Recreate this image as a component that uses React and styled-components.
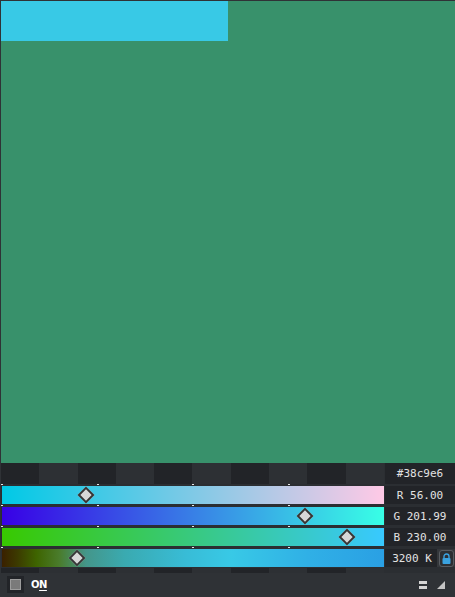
import React from "react";
import styled, { createGlobalStyle } from "styled-components";

const GlobalStyle = createGlobalStyle`
  html, body {
    margin: 0;
    padding: 0;
    background: #2f3236;
    overflow: hidden;
  }
`;

const Frame = styled.div`
  width: 455px;
  height: 597px;
  box-sizing: border-box;
  padding: 1px 0 0 1px;
  background: #2f3236;
  display: flex;
  flex-direction: column;
  font-family: "DejaVu Sans Mono", "Liberation Mono", monospace;
`;

const Viewport = styled.div`
  height: 462px;
  background: #38916b;
  flex-shrink: 0;
`;

const Swatch = styled.div`
  width: 227px;
  height: 40px;
  background: #38c9e6;
`;

const Controls = styled.div`
  display: flex;
  flex-direction: column;
  background: #2b2e32;
`;

const Row = styled.div`
  display: grid;
  grid-template-columns: 383px 1fr;
  column-gap: 1px;
  height: ${(p) => p.$h}px;
`;

const Checker = styled.div`
  display: flex;
  height: 100%;
`;

const Cell = styled.div`
  flex: 1;
  background: ${(p) => (p.$dark ? "#222428" : "#2d3034")};
`;

const Sliders = styled.div`
  display: flex;
  flex-direction: column;
  gap: 3px;
  padding: 2px 0 1px;
`;

const Track = styled.div`
  position: relative;
  margin-left: 1px;
  height: 100%;
  background: ${(p) => p.$bg};
`;

const Tick = styled.span`
  position: absolute;
  top: -2px;
  left: ${(p) => p.$at}%;
  width: 2px;
  height: 1px;
  background: #e6e6e6;
  margin-left: -1px;
`;

const Thumb = styled.span`
  position: absolute;
  top: 50%;
  left: ${(p) => p.$at}%;
  width: 8px;
  height: 8px;
  background: #d7d7d7;
  border: 2px solid #353535;
  transform: translate(-50%, -50%) rotate(45deg);
`;

const ValueCell = styled.div`
  display: grid;
  grid-template-columns: ${(p) => (p.$lock ? "1fr 16px" : "1fr")};
  column-gap: 2px;
  background: #34373b;
`;

const ValueBox = styled.div`
  background: #222428;
  color: #e2e2e2;
  font-size: 11px;
  display: flex;
  align-items: center;
  justify-content: center;
  padding-left: ${(p) => (p.$lock ? "2px" : "0")};
  white-space: pre;
`;

const LockButton = styled.div`
  display: flex;
  align-items: center;
  justify-content: center;
  margin: 1px 1px 0 0;
  border: 1px solid #585c61;
  border-radius: 3px;
  background: #2c2f33;
`;

const BottomBar = styled.div`
  flex: 1;
  display: flex;
  align-items: center;
  padding: 0 10px 1px 6px;
  background: #2f3236;
`;

const CheckBox = styled.div`
  width: 17px;
  height: 17px;
  background: #222428;
  display: flex;
  align-items: center;
  justify-content: center;
`;

const CheckInner = styled.div`
  width: 9px;
  height: 9px;
  background: #7a7a7a;
  border: 1px solid #9c9c9c;
`;

const OnLabel = styled.span`
  margin-left: 7px;
  color: #ffffff;
  font-family: "DejaVu Sans", "Liberation Sans", sans-serif;
  font-weight: bold;
  font-size: 10px;
  letter-spacing: -0.5px;

  u {
    text-underline-offset: 2px;
  }
`;

const Spacer = styled.div`
  flex: 1;
`;

const ToolIcons = styled.div`
  display: flex;
  align-items: center;
  gap: 10px;
`;

const sliders = [
  {
    label: "R 56.00",
    at: (56 / 255) * 100,
    bg: "linear-gradient(to right, #00c9e6, #ffc9e6)",
  },
  {
    label: "G 201.99",
    at: (201.99 / 255) * 100,
    bg: "linear-gradient(to right, #3800e6, #38ffe6)",
  },
  {
    label: "B 230.00",
    at: (230 / 255) * 100,
    bg: "linear-gradient(to right, #38c900, #38c9ff)",
  },
  {
    label: "3200 K",
    at: 19.7,
    lock: true,
    bg: "linear-gradient(to right, #3a2000 0%, #3c3a00 4%, #3e6400 9%, #4a7c2c 15%, #44968a 22%, #3aaab0 32%, #38bcd6 48%, #38c9e6 60%, #30b0e6 80%, #2aa0e4 100%)",
  },
];

const cells = Array.from({ length: 10 }, (_, i) => i % 2 === 0);

const CheckerStrip = () => (
  <Checker>
    {cells.map((dark, i) => (
      <Cell key={i} $dark={dark} />
    ))}
  </Checker>
);

const LockIcon = () => (
  <svg width="9" height="11" viewBox="0 0 9 11">
    <path d="M2 5V3.5a2.5 2.5 0 0 1 5 0V5" fill="none" stroke="#3aa2e0" strokeWidth="1.4" />
    <rect x="0.5" y="5" width="8" height="6" rx="1" fill="#3aa2e0" />
  </svg>
);

const MenuIcon = () => (
  <svg width="8" height="8" viewBox="0 0 8 8">
    <rect x="0" y="0" width="8" height="3" fill="#d4d4d4" />
    <rect x="0" y="5" width="8" height="3" fill="#d4d4d4" />
  </svg>
);

const GripIcon = () => (
  <svg width="8" height="8" viewBox="0 0 8 8">
    <path d="M8 0V8H0Z" fill="#c4c4c4" />
  </svg>
);

export default function App() {
  return (
    <>
      <GlobalStyle />
      <Frame>
        <Viewport>
          <Swatch />
        </Viewport>
        <Controls>
          <Row $h={21}>
            <CheckerStrip />
            <ValueCell>
              <ValueBox>#38c9e6</ValueBox>
            </ValueCell>
          </Row>
          <Sliders>
            {sliders.map((s) => (
              <Row $h={18} key={s.label}>
                <Track $bg={s.bg}>
                  {[0, 25, 50, 75].map((t) => (
                    <Tick key={t} $at={t} />
                  ))}
                  <Thumb $at={s.at} />
                </Track>
                <ValueCell $lock={s.lock}>
                  <ValueBox $lock={s.lock}>{s.label}</ValueBox>
                  {s.lock && (
                    <LockButton>
                      <LockIcon />
                    </LockButton>
                  )}
                </ValueCell>
              </Row>
            ))}
          </Sliders>
          <Row $h={5}>
            <CheckerStrip />
            <div />
          </Row>
        </Controls>
        <BottomBar>
          <CheckBox>
            <CheckInner />
          </CheckBox>
          <OnLabel>
            O<u>N</u>
          </OnLabel>
          <Spacer />
          <ToolIcons>
            <MenuIcon />
            <GripIcon />
          </ToolIcons>
        </BottomBar>
      </Frame>
    </>
  );
}
